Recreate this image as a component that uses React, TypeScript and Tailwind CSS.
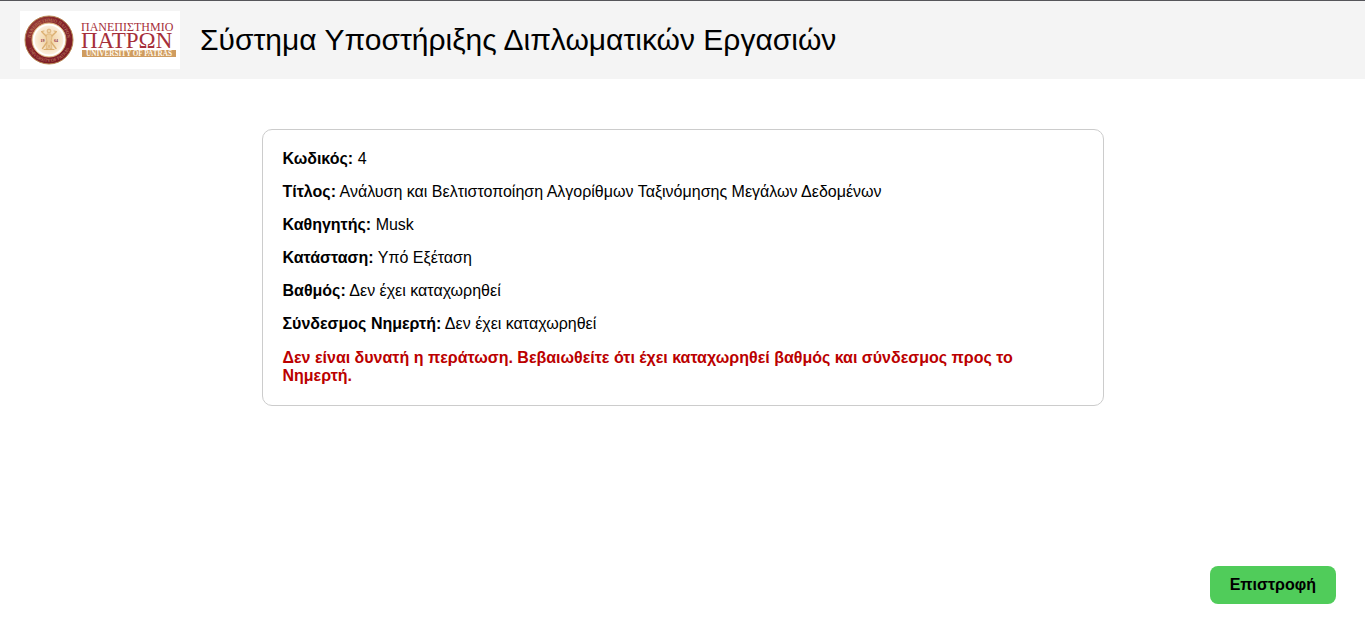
import React from "react";

const details = [
  { label: "Κωδικός:", value: "4" },
  { label: "Τίτλος:", value: "Ανάλυση και Βελτιστοποίηση Αλγορίθμων Ταξινόμησης Μεγάλων Δεδομένων" },
  { label: "Καθηγητής:", value: "Musk" },
  { label: "Κατάσταση:", value: "Υπό Εξέταση" },
  { label: "Βαθμός:", value: "Δεν έχει καταχωρηθεί" },
  { label: "Σύνδεσμος Νημερτή:", value: "Δεν έχει καταχωρηθεί" },
];

function Logo() {
  return (
    <svg
      className="h-[58px] w-40 shrink-0 bg-white font-['Liberation_Serif',serif]"
      viewBox="0 0 160 58"
      role="img"
      aria-label="Πανεπιστήμιο Πατρών"
    >
      <defs>
        <radialGradient id="rim" cx="0.35" cy="0.3" r="0.8">
          <stop offset="0" stopColor="#a34a3c" />
          <stop offset="0.5" stopColor="#84232a" />
          <stop offset="1" stopColor="#7a1a25" />
        </radialGradient>
        <radialGradient id="disc">
          <stop offset="0" stopColor="#f0cf9c" />
          <stop offset="0.65" stopColor="#f8e6cb" />
          <stop offset="1" stopColor="#fdf6ea" />
        </radialGradient>
        <path id="ringTop" d="M 10.5 29 A 18.5 18.5 0 0 1 47.5 29" />
        <path id="ringBottom" d="M 7 29 A 22 22 0 0 0 51 29" />
      </defs>
      <circle cx="29" cy="29" r="24" fill="url(#rim)" stroke="#b98a55" strokeWidth="1" />
      <circle cx="29" cy="29" r="17" fill="url(#disc)" stroke="#d9b07a" strokeWidth="1" />
      <circle cx="29" cy="29" r="15.2" fill="none" stroke="#ffffff" strokeWidth="1.6" />
      <g fill="#c48a68" fontSize="4.5">
        <text textAnchor="middle">
          <textPath href="#ringTop" startOffset="50%">ΠΑΝΕΠΙΣΤΗΜΙΟ ΠΑΤΡΩΝ</textPath>
        </text>
        <text textAnchor="middle">
          <textPath href="#ringBottom" startOffset="50%">UNIVERSITY OF PATRAS</textPath>
        </text>
      </g>
      <g stroke="#dcb071" strokeWidth="1.4" strokeLinecap="round" fill="none">
        <path d="M22 21 L28 27 L36 37.5 M36 21 L30 27 L22.5 37.5" />
        <path d="M21.5 20.5 L24 20 M36.5 20.5 L34 20 M24 38.5 H34" strokeWidth="1" />
      </g>
      <path d="M27 23 H31 L32 26 L30.8 31 L32 38 H30 L29 34 L28 38 H26 L27.2 31 L26 26 Z" fill="#edcf9e" stroke="#d3a262" strokeWidth="0.5" />
      <circle cx="29" cy="20" r="1.9" fill="#f0d4a6" stroke="#cf9c5a" strokeWidth="0.6" />
      <g fill="#8c2f45" fontSize="4" fontWeight="bold" textAnchor="middle">
        <text x="22.5" y="31">19</text>
        <text x="36" y="31">64</text>
      </g>
      <g fill="#a62f3a">
        <text x="61" y="20" fontSize="12">ΠΑΝΕΠΙΣΤΗΜΙΟ</text>
        <text x="61" y="37" fontSize="23">ΠΑΤΡΩΝ</text>
      </g>
      <rect x="62" y="39" width="94" height="7" fill="#cf9c5f" />
      <text x="109" y="45" fontSize="7.2" fontWeight="bold" textAnchor="middle" fill="#fff8ec">
        UNIVERSITY OF PATRAS
      </text>
    </svg>
  );
}

export default function App() {
  return (
    <div className="flex min-h-screen flex-col bg-white font-['Liberation_Sans',Arial,sans-serif] text-base leading-[18px] text-black">
      <header className="flex items-center gap-5 border-t border-[#55555a] bg-[#f4f4f4] px-5 py-2.5">
        <Logo />
        <h1 className="text-[30px] leading-9">Σύστημα Υποστήριξης Διπλωματικών Εργασιών</h1>
      </header>

      <main className="flex justify-center px-5 pt-[50px]">
        <section className="w-full max-w-[842px] rounded-[10px] border border-[#cccccc] p-5">
          <div className="flex flex-col gap-[15px]">
            {details.map(({ label, value }) => (
              <p key={label}>
                <strong>{label}</strong> {value}
              </p>
            ))}
          </div>
          <p role="alert" className="mt-4 font-bold text-[#bb0000]">
            Δεν είναι δυνατή η περάτωση. Βεβαιωθείτε ότι έχει καταχωρηθεί βαθμός και σύνδεσμος προς το Νημερτή.
          </p>
        </section>
      </main>

      <footer className="mt-auto flex justify-end px-[29px] py-7">
        <button type="button" className="cursor-pointer rounded-lg bg-[#50cc5a] px-5 py-2.5 font-bold">
          Επιστροφή
        </button>
      </footer>
    </div>
  );
}
